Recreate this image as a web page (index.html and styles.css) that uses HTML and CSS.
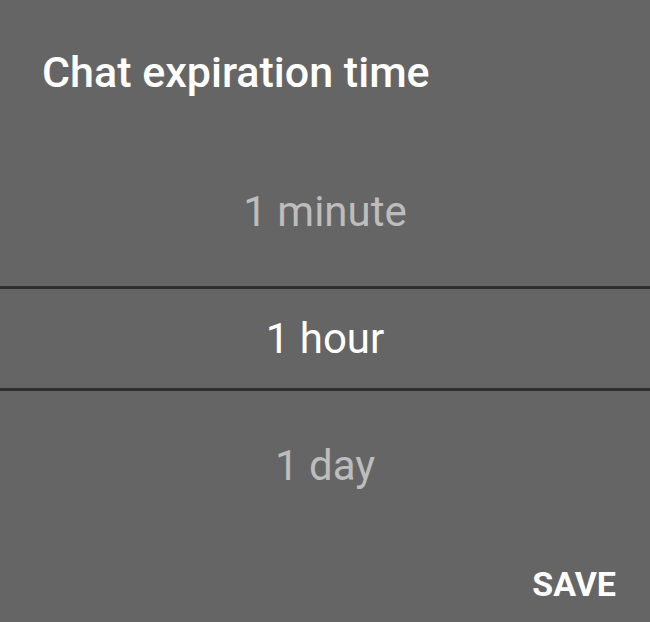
FILE: index.html
```html
<!DOCTYPE html>
<html>
<head>
<meta charset="utf-8">
<link rel="stylesheet" href="styles.css">
</head>
<body>
<div class="dialog">
  <h1 class="title">Chat expiration time</h1>
  <div class="picker">
    <div class="option">1 minute</div>
    <div class="option selected">1 hour</div>
    <div class="option">1 day</div>
  </div>
  <div class="actions">
    <button class="save">SAVE</button>
  </div>
</div>
</body>
</html>
```

FILE: styles.css
```css
html, body {
  margin: 0;
  padding: 0;
}
body {
  width: 650px;
  height: 622px;
  background: #656565;
  font-family: Roboto, "Liberation Sans", sans-serif;
  overflow: hidden;
}
.dialog {
  display: flex;
  flex-direction: column;
  height: 622px;
}
.title {
  margin: 0;
  padding: 47px 0 0 42px;
  font-size: 43px;
  font-weight: 500;
  color: #fff;
  line-height: 50px;
  height: 60px;
}
.picker {
  margin-top: 41px;
  display: flex;
  flex-direction: column;
}
.option {
  height: 127px;
  display: flex;
  align-items: center;
  justify-content: center;
  font-size: 42px;
  color: #bdbdbd;
}
.option.selected {
  color: #fff;
  border-top: 3px solid #2e2e2e;
  border-bottom: 3px solid #2e2e2e;
  height: 99px;
  margin: 11px 0;
}
.actions {
  display: flex;
  justify-content: flex-end;
  padding: 0 34px 0 0;
  margin-top: 35px;
}
.save {
  background: none;
  border: none;
  color: #fff;
  font-family: Roboto, "Liberation Sans", sans-serif;
  font-weight: 700;
  font-size: 34px;
  padding: 0;
}
```
